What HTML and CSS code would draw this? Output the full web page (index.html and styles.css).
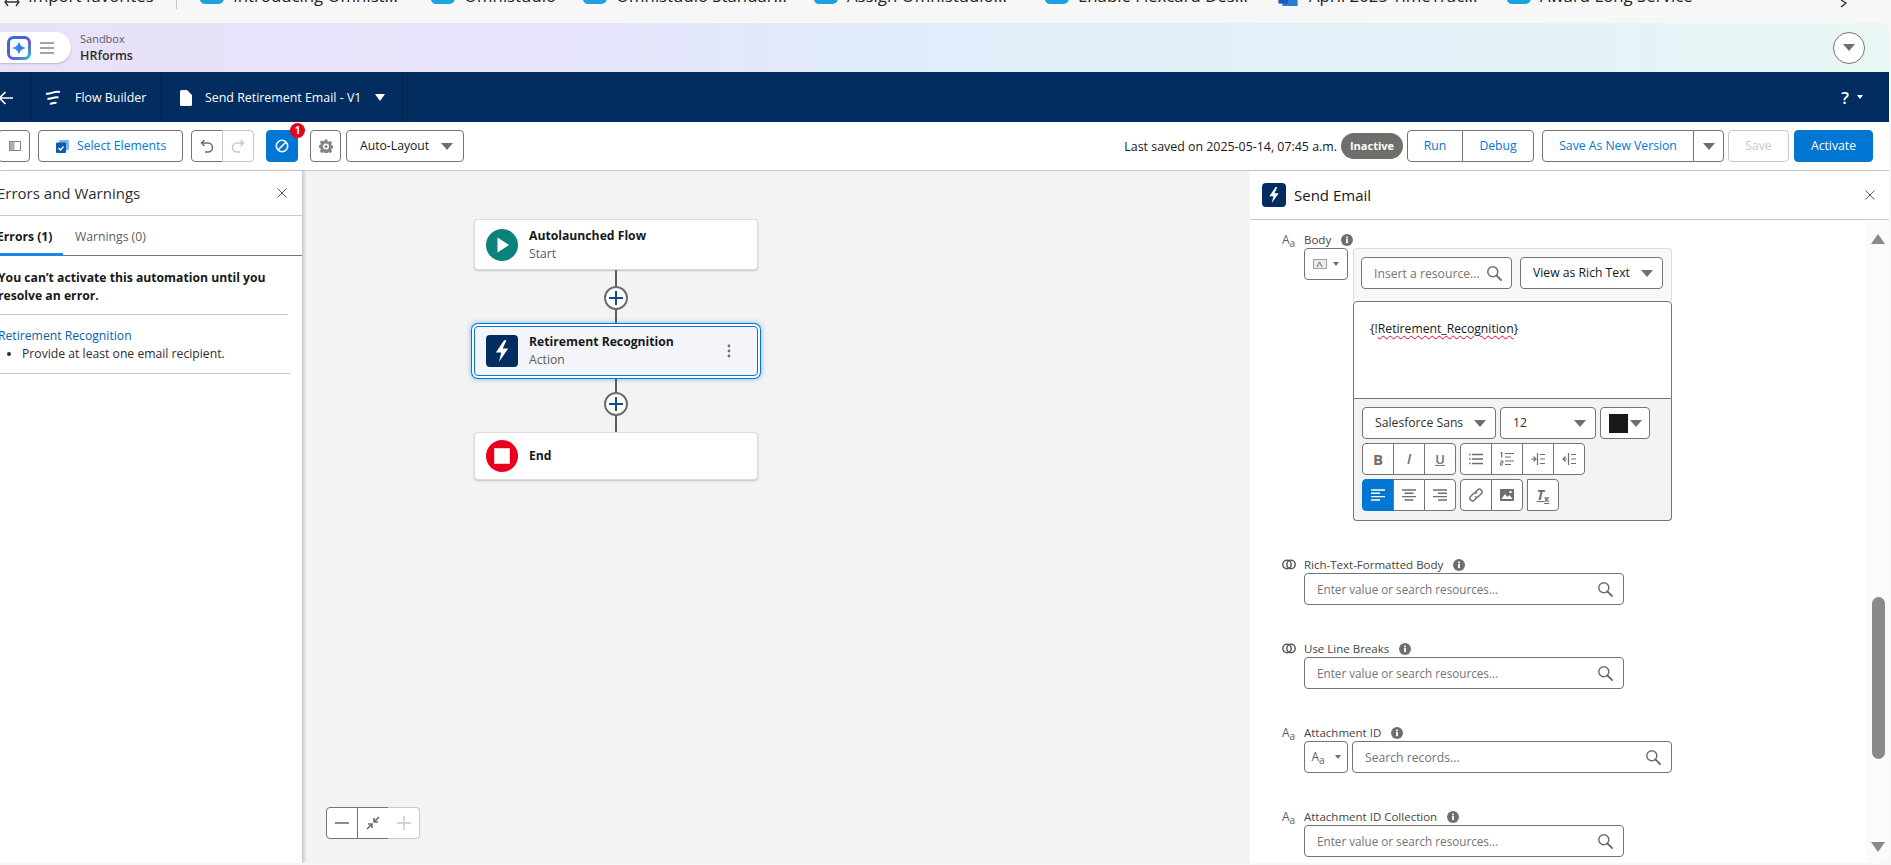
FILE: index.html
```html
<!DOCTYPE html>
<html lang="en">
<head>
    <meta charset="UTF-8">
    <title>Flow Builder</title>
    <link rel="stylesheet" href="styles.css">
</head>
<body>
    <!-- shared icons -->
    <svg class="sprite" aria-hidden="true">
        <symbol id="i-search" viewBox="0 0 16 16"><circle cx="6.800" cy="6.800" r="5" fill="none" stroke="currentColor" stroke-width="1.500"/><path d="M10.500 10.500 15 15" stroke="currentColor" stroke-width="1.800" stroke-linecap="round"/></symbol>
        <symbol id="i-bolt" viewBox="0 0 24 24"><path d="M13.600 4 7.400 13.200h4l-1.600 6.800 6.900-9.800h-4.200L15.400 4z" fill="#fff"/></symbol>
        <symbol id="i-cloud" viewBox="0 0 24 18"><path d="M5 16C2 16 0 14 0 11.500 0 9 2 7.400 4 7.200 5 3 8 1 11 1c2.500 0 4.500 1.200 5.500 3C20.500 3.800 24 6.500 24 10.500 24 14 21 16 18 16z" fill="#1ea1e0"/></symbol>
        <symbol id="i-rings" viewBox="0 0 14 11"><circle cx="5" cy="5.500" r="4.200" fill="none" stroke="#5c5c5c" stroke-width="1.500"/><circle cx="9" cy="5.500" r="4.200" fill="none" stroke="#5c5c5c" stroke-width="1.500"/></symbol>
        <symbol id="i-info" viewBox="0 0 12 12"><circle cx="6" cy="6" r="6" fill="#706e6b"/><rect x="5.100" y="5" width="1.800" height="4.200" fill="#fff"/><rect x="5.100" y="2.600" width="1.800" height="1.700" fill="#fff"/></symbol>
        <symbol id="i-plus" viewBox="0 0 14 14"><path d="M0 7h14M7 0v14" stroke="#0b4f8f" stroke-width="2"/></symbol>
    </svg>

    <!-- browser favorites bar -->
    <div class="favorites">
        <div class="fav fav-import">
            <svg class="fav-arrows" viewBox="0 0 16 10"><path d="M1 5h14M4 1 1 5l3 4M12 1l3 4-3 4" fill="none" stroke="#333" stroke-width="1.300"/></svg>
            <span>Import favorites</span>
        </div>
        <div class="fav-sep"></div>
        <div class="fav"><svg class="fav-icon"><use href="#i-cloud"/></svg><span>Introducing Omnist...</span></div>
        <div class="fav fav-short"><svg class="fav-icon"><use href="#i-cloud"/></svg><span>Omnistudio</span></div>
        <div class="fav"><svg class="fav-icon"><use href="#i-cloud"/></svg><span>Omnistudio Standar...</span></div>
        <div class="fav"><svg class="fav-icon"><use href="#i-cloud"/></svg><span>Assign Omnistudio...</span></div>
        <div class="fav"><svg class="fav-icon"><use href="#i-cloud"/></svg><span>Enable Flexcard Des...</span></div>
        <div class="fav"><svg class="fav-icon fav-word" viewBox="0 0 24 10"><rect x="5" width="19" height="10" fill="#2b7cd3"/><rect width="12" height="7" fill="#185abd"/></svg><span>April 2025 TimeTrac...</span></div>
        <div class="fav"><svg class="fav-icon"><use href="#i-cloud"/></svg><span>Award Long Service</span></div>
        <svg class="fav-more" viewBox="0 0 10 8"><path d="M3 0 8 3 3 7" fill="none" stroke="#333" stroke-width="1.400"/></svg>
    </div>

    <div class="app">
        <!-- org bar -->
        <div class="org-bar">
            <div class="launcher">
                <svg class="logo" viewBox="0 0 24 24">
                    <defs><linearGradient id="logoEdge" x1="0" y1="0" x2="1" y2="1"><stop offset="0" stop-color="#2a6fe8"/><stop offset=".55" stop-color="#6b4fe0"/><stop offset="1" stop-color="#35b5c5"/></linearGradient></defs>
                    <rect x="1.500" y="1.500" width="21" height="21" rx="5" fill="#fff" stroke="url(#logoEdge)" stroke-width="3"/>
                    <path d="M12 5c.8 4 2.600 6 7 7-4.400 1-6.200 3-7 7-.8-4-2.600-6-7-7 4.400-1 6.200-3 7-7z" fill="#2f86e8"/>
                </svg>
                <svg class="burger" viewBox="0 0 14 12"><path d="M0 1h14M0 6h14M0 11h14" stroke="#858585" stroke-width="1.600"/></svg>
            </div>
            <div class="org-name">
                <div class="org-kind">Sandbox</div>
                <div class="org-title">HRforms</div>
            </div>
            <div class="org-toggle"><span class="caret caret-grey"></span></div>
        </div>

        <!-- builder nav -->
        <div class="nav">
            <div class="nav-cell nav-back">
                <svg class="nav-arrow" viewBox="0 0 16 14"><path d="M15 7H2M7.500 1 1.500 7l6 6" fill="none" stroke="#fff" stroke-width="1.600"/></svg>
            </div>
            <div class="nav-cell nav-app">
                <svg class="nav-flow" viewBox="0 0 16 16"><path d="M1 3.500c4 1.500 8-3 14-1.500M2.500 8.500c3 1.500 7-2.500 11-1M5 13.500c2 .8 4-1.500 6.500-.5" fill="none" stroke="#fff" stroke-width="2"/></svg>
                Flow Builder
            </div>
            <div class="nav-cell nav-doc">
                <svg class="nav-file" viewBox="0 0 12 16"><path d="M1.500 0H7l5 5v9.500a1.500 1.500 0 0 1-1.500 1.500h-9A1.500 1.500 0 0 1 0 14.500v-13A1.500 1.500 0 0 1 1.500 0z" fill="#fff"/></svg>
                Send Retirement Email - V1
                <span class="caret caret-white"></span>
            </div>
            <div class="nav-help">?<span class="caret caret-tiny"></span></div>
        </div>

        <!-- builder toolbar -->
        <div class="toolbar">
            <button class="btn btn-icon btn-panel"><svg class="panel-icon" viewBox="0 0 12 10"><rect x=".5" y=".5" width="11" height="9" fill="#fff" stroke="#858585"/><rect x="1" y="1" width="4.500" height="8" fill="#b0b0b0"/></svg></button>
            <button class="btn btn-select">
                <svg class="select-icon" viewBox="0 0 13 13"><rect x="3" y="0" width="10" height="10" rx="1" fill="#7fb5e6"/><rect x="0" y="2.500" width="10" height="10.500" rx="1" fill="#0b5cab"/><path d="M2.500 8l2 2 3-3.500" fill="none" stroke="#fff" stroke-width="1.200"/></svg>
                Select Elements
            </button>
            <div class="btn-group group-undo">
                <button class="btn btn-icon"><svg class="tb-icon" viewBox="0 0 14 14"><path d="M4.500 1 1.500 4l3 3M2 4h6a4.500 4.500 0 0 1 0 9H5" fill="none" stroke="#706e6b" stroke-width="1.500"/></svg></button>
                <button class="btn btn-icon btn-off"><svg class="tb-icon" viewBox="0 0 14 14"><path d="M9.500 1l3 3-3 3M12 4H6a4.500 4.500 0 0 0 0 9h3" fill="none" stroke="#c9c9c9" stroke-width="1.500"/></svg></button>
            </div>
            <button class="btn btn-icon btn-error">
                <svg class="tb-icon" viewBox="0 0 14 14"><circle cx="7" cy="7" r="5.700" fill="none" stroke="#fff" stroke-width="1.600"/><path d="M3.200 10.800 10.800 3.200" stroke="#fff" stroke-width="1.600"/></svg>
                <span class="badge">1</span>
            </button>
            <button class="btn btn-icon btn-gear">
                <svg class="tb-icon" viewBox="0 0 14 14"><path d="M5.800.5h2.400l.4 1.700 1.300.6 1.500-.9 1.700 1.700-.9 1.500.6 1.300 1.700.4v2.400l-1.700.4-.6 1.300.9 1.500-1.700 1.700-1.500-.9-1.300.6-.4 1.700H5.800l-.4-1.700-1.300-.6-1.500.9L.9 11.900l.9-1.500-.6-1.300L-.5 8.700V6.300l1.700-.4.600-1.300-.9-1.500L2.600 1.400l1.500.9 1.300-.6z" fill="#858585"/><circle cx="7" cy="7.500" r="3" fill="#fff"/><circle cx="7" cy="7.500" r="1.500" fill="#858585"/></svg>
            </button>
            <button class="btn btn-layout">Auto-Layout<span class="caret caret-grey"></span></button>

            <div class="toolbar-right">
                <span class="saved">Last saved on 2025-05-14, 07:45 a.m.</span>
                <span class="status">Inactive</span>
                <div class="btn-group group-run">
                    <button class="btn btn-run">Run</button>
                    <button class="btn btn-debug">Debug</button>
                </div>
                <div class="btn-group group-save">
                    <button class="btn btn-saveas">Save As New Version</button>
                    <button class="btn btn-more"><span class="caret caret-grey"></span></button>
                </div>
                <button class="btn btn-save">Save</button>
                <button class="btn btn-activate">Activate</button>
            </div>
        </div>

        <div class="workspace">
            <!-- errors panel -->
            <aside class="errors">
                <div class="errors-head">
                    <h2>Errors and Warnings</h2>
                    <svg class="close" viewBox="0 0 10 10"><path d="M.5.5l9 9M9.500.5l-9 9" stroke="#5c5c5c" stroke-width="1"/></svg>
                </div>
                <div class="tabs">
                    <div class="tab tab-active">Errors (1)</div>
                    <div class="tab">Warnings (0)</div>
                </div>
                <div class="errors-msg">You can’t activate this automation until you resolve an error.</div>
                <div class="errors-item">
                    <a class="errors-link">Retirement Recognition</a>
                    <ul><li>Provide at least one email recipient.</li></ul>
                </div>
            </aside>

            <!-- flow canvas -->
            <main class="canvas">
                <div class="flow">
                    <div class="node">
                        <svg class="node-icon" viewBox="0 0 32 32"><circle cx="16" cy="16" r="16" fill="#0b827c"/><path d="M11.500 8.500v15L23 16z" fill="#fff"/></svg>
                        <div>
                            <div class="node-title">Autolaunched Flow</div>
                            <div class="node-sub">Start</div>
                        </div>
                    </div>
                    <div class="connector"><span class="plus"><svg class="plus-icon"><use href="#i-plus"/></svg></span></div>
                    <div class="node node-selected">
                        <svg class="node-icon node-action" viewBox="0 0 24 24"><use href="#i-bolt"/></svg>
                        <div>
                            <div class="node-title">Retirement Recognition</div>
                            <div class="node-sub">Action</div>
                        </div>
                        <svg class="node-dots" viewBox="0 0 4 14"><circle cx="2" cy="2" r="1.400"/><circle cx="2" cy="7" r="1.400"/><circle cx="2" cy="12" r="1.400"/></svg>
                    </div>
                    <div class="connector"><span class="plus"><svg class="plus-icon"><use href="#i-plus"/></svg></span></div>
                    <div class="node node-end">
                        <svg class="node-icon" viewBox="0 0 32 32"><circle cx="16" cy="16" r="16" fill="#ea001e"/><rect x="8.500" y="8.500" width="15" height="15" fill="#fff" stroke="#f6c6cc" stroke-width="1"/></svg>
                        <div class="node-title">End</div>
                    </div>
                </div>

                <div class="zoom-ctl">
                    <button class="zoom-btn"><svg viewBox="0 0 14 14"><path d="M0 7h14" stroke="#706e6b" stroke-width="1.600"/></svg></button>
                    <button class="zoom-btn"><svg viewBox="0 0 14 14"><path d="M13 1 8.500 5.500M8 2v4h4M1 13l4.500-4.500M2 8h4v4" fill="none" stroke="#706e6b" stroke-width="1.600"/></svg></button>
                    <button class="zoom-btn zoom-off"><svg viewBox="0 0 14 14"><path d="M0 7h14M7 0v14" stroke="#c9c9c9" stroke-width="1.400"/></svg></button>
                </div>
            </main>

            <!-- element editor -->
            <section class="editor">
                <div class="editor-head">
                    <svg class="editor-icon" viewBox="0 0 24 24"><use href="#i-bolt"/></svg>
                    <h2>Send Email</h2>
                    <svg class="close editor-close" viewBox="0 0 10 10"><path d="M.5.5l9 9M9.500.5l-9 9" stroke="#5c5c5c" stroke-width="1"/></svg>
                </div>
                <div class="editor-body">
                    <div class="fields">
                        <div class="field field-rte">
                            <div class="field-label"><span class="aa">A<small>a</small></span><label>Body</label><svg class="info"><use href="#i-info"/></svg></div>
                            <div class="field-row">
                                <button class="btn type-btn"><svg class="type-glyph" viewBox="0 0 14 10"><rect x=".5" y=".5" width="13" height="9" fill="#ecebea" stroke="#a0a0a0"/><path d="M4 8l2.500-5L9 8" fill="none" stroke="#706e6b"/></svg><span class="caret caret-tiny-grey"></span></button>
                                <div class="rte">
                                    <div class="rte-top">
                                        <div class="input input-insert"><input placeholder="Insert a resource..."><svg class="search"><use href="#i-search"/></svg></div>
                                        <button class="btn btn-view">View as Rich Text<span class="caret caret-grey"></span></button>
                                    </div>
                                    <div class="rte-text">{!<span class="squiggle">Retirement_Recognition</span>}</div>
                                    <div class="rte-tools">
                                        <div class="tools-row">
                                            <button class="btn tool-select tool-font">Salesforce Sans<span class="caret caret-grey"></span></button>
                                            <button class="btn tool-select tool-size">12<span class="caret caret-grey"></span></button>
                                            <button class="btn tool-color"><span class="swatch"></span><span class="caret caret-grey"></span></button>
                                        </div>
                                        <div class="tools-row">
                                            <div class="btn-group">
                                                <button class="btn tool tool-b">B</button>
                                                <button class="btn tool tool-i">I</button>
                                                <button class="btn tool tool-u">U</button>
                                            </div>
                                            <div class="btn-group">
                                                <button class="btn tool"><svg viewBox="0 0 14 12"><path d="M3 1.500h11M3 6h11M3 10.500h11M0 1.500h1.500M0 6h1.500M0 10.500h1.500" stroke="#706e6b" stroke-width="1.300"/></svg></button>
                                                <button class="btn tool"><svg viewBox="0 0 14 14"><path d="M5 1.500h9M5 5h6M5 9h9M5 12.500h6M.5 1l1.300-.5v5M.3 9h2.400v2H.3v2h2.700" fill="none" stroke="#706e6b" stroke-width="1.200"/></svg></button>
                                                <button class="btn tool"><svg viewBox="0 0 14 12"><path d="M0 6h4M2.500 3.500 5 6l-2.500 2.500M6.500 0v12M9 1.500h5M9 6h5M9 10.500h5" fill="none" stroke="#706e6b" stroke-width="1.200"/></svg></button>
                                                <button class="btn tool"><svg viewBox="0 0 14 12"><path d="M5 6H1M3.500 3.500 1 6l2.500 2.500M6.500 0v12M9 1.500h5M9 6h5M9 10.500h5" fill="none" stroke="#706e6b" stroke-width="1.200"/></svg></button>
                                            </div>
                                        </div>
                                        <div class="tools-row">
                                            <div class="btn-group">
                                                <button class="btn tool tool-on"><svg viewBox="0 0 14 12"><path d="M0 1h14M0 4.300h9M0 7.600h14M0 11h9" stroke="#fff" stroke-width="1.400"/></svg></button>
                                                <button class="btn tool"><svg viewBox="0 0 14 12"><path d="M0 1h14M2.500 4.300h9M0 7.600h14M2.500 11h9" stroke="#706e6b" stroke-width="1.400"/></svg></button>
                                                <button class="btn tool"><svg viewBox="0 0 14 12"><path d="M0 1h14M5 4.300h9M0 7.600h14M5 11h9" stroke="#706e6b" stroke-width="1.400"/></svg></button>
                                            </div>
                                            <div class="btn-group">
                                                <button class="btn tool"><svg viewBox="0 0 14 14"><path d="M6 4.500 8.500 2a2.600 2.600 0 0 1 3.700 3.700L9.500 8.400a2.600 2.600 0 0 1-3.500 0M8 9.500 5.500 12a2.600 2.600 0 0 1-3.700-3.700L4.500 5.600a2.600 2.600 0 0 1 3.500 0" fill="none" stroke="#706e6b" stroke-width="1.400"/></svg></button>
                                                <button class="btn tool"><svg viewBox="0 0 14 12"><rect width="14" height="12" rx="1" fill="#706e6b"/><path d="M1.500 10 5 5l2.500 3L9.500 6l3 4z" fill="#fff"/><circle cx="10.500" cy="3" r="1.200" fill="#fff"/></svg></button>
                                            </div>
                                            <div class="btn-group">
                                                <button class="btn tool tool-clear">T<small>x</small></button>
                                            </div>
                                        </div>
                                    </div>
                                </div>
                            </div>
                        </div>

                        <div class="field">
                            <div class="field-label"><svg class="rings"><use href="#i-rings"/></svg><label>Rich-Text-Formatted Body</label><svg class="info"><use href="#i-info"/></svg></div>
                            <div class="field-row">
                                <div class="input input-std"><input placeholder="Enter value or search resources..."><svg class="search"><use href="#i-search"/></svg></div>
                            </div>
                        </div>

                        <div class="field">
                            <div class="field-label"><svg class="rings"><use href="#i-rings"/></svg><label>Use Line Breaks</label><svg class="info"><use href="#i-info"/></svg></div>
                            <div class="field-row">
                                <div class="input input-std"><input placeholder="Enter value or search resources..."><svg class="search"><use href="#i-search"/></svg></div>
                            </div>
                        </div>

                        <div class="field">
                            <div class="field-label"><span class="aa">A<small>a</small></span><label>Attachment ID</label><svg class="info"><use href="#i-info"/></svg></div>
                            <div class="field-row">
                                <button class="btn type-btn"><span class="aa aa-btn">A<small>a</small></span><span class="caret caret-tiny-grey"></span></button>
                                <div class="input input-wide"><input placeholder="Search records..."><svg class="search"><use href="#i-search"/></svg></div>
                            </div>
                        </div>

                        <div class="field">
                            <div class="field-label"><span class="aa">A<small>a</small></span><label>Attachment ID Collection</label><svg class="info"><use href="#i-info"/></svg></div>
                            <div class="field-row">
                                <div class="input input-std"><input placeholder="Enter value or search resources..."><svg class="search"><use href="#i-search"/></svg></div>
                            </div>
                        </div>
                    </div>

                    <div class="scrollbar">
                        <span class="scroll-up"></span>
                        <div class="scroll-thumb"></div>
                        <span class="scroll-down"></span>
                    </div>
                </div>
            </section>
        </div>
    </div>
</body>
</html>
```

FILE: styles.css
```css
* {
    box-sizing: border-box;
    margin: 0;
    padding: 0;
}

html, body {
    width: 1891px;
    height: 865px;
    overflow: hidden;
}

body {
    background-color: #f7f7f7;
    color: #181818;
    font-family: "Open Sans", "Noto Sans", sans-serif;
    font-size: 12.2px;
}

button, input {
    font-family: inherit;
    font-size: 12.2px;
}

svg {
    display: block;
    flex: none;
}

.sprite {
    position: absolute;
    width: 0;
    height: 0;
}

/* favorites bar */
.favorites {
    display: flex;
    height: 23px;
    overflow: hidden;
    padding-left: 4px;
    background-color: #f7f7f7;
}

.fav {
    display: flex;
    flex: none;
    width: 231px;
    height: 23px;
    font-size: 16.8px;
    line-height: 20px;
    color: #222;
}

.fav span {
    margin-top: -14px;
    white-space: nowrap;
}

.fav-short {
    width: 152px;
}

.fav-import {
    width: 172px;
}

.fav-arrows {
    width: 16px;
    height: 10px;
    margin: -3px 8px 0 0;
}

.fav-sep {
    width: 1px;
    height: 9px;
    margin-right: 23px;
    background-color: #c9c9c9;
}

.fav-icon {
    width: 24px;
    height: 18px;
    margin: -12px 9px 0 0;
}

.fav-word {
    height: 8px;
    margin-top: -2px;
}

.fav-more {
    width: 10px;
    height: 8px;
    margin-left: 100px;
}

/* app frame */
.app {
    display: flex;
    flex-direction: column;
    width: 1889px;
    height: 840px;
    overflow: hidden;
    border-top-right-radius: 8px;
    border-bottom-right-radius: 8px;
    background-color: #fff;
}

.org-bar {
    display: flex;
    align-items: center;
    flex: none;
    height: 49px;
    background: linear-gradient(90deg, #e9e1f8 0%, #e5e4fa 30%, #e0edfa 50%, #e3f1f8 75%, #e9f6f5 100%);
}

.launcher {
    display: flex;
    align-items: center;
    width: 71px;
    height: 31px;
    padding-left: 7px;
    border-radius: 0 16px 16px 0;
    background-color: #fff;
    box-shadow: 0 1px 2px rgba(0, 0, 0, 0.2);
}

.logo {
    width: 24px;
    height: 24px;
}

.burger {
    width: 14px;
    height: 12px;
    margin-left: 9px;
}

.org-name {
    margin-left: 9px;
}

.org-kind {
    font-size: 11px;
    line-height: 17px;
    color: #5c5c5c;
}

.org-title {
    font-size: 12.5px;
    font-weight: 600;
    line-height: 18px;
    color: #2e2e2e;
}

.org-toggle {
    display: flex;
    align-items: center;
    justify-content: center;
    width: 32px;
    height: 32px;
    margin-left: auto;
    margin-right: 24px;
    border: 1px solid #747474;
    border-radius: 50%;
    background-color: #fff;
}

.caret {
    display: inline-block;
    flex: none;
    width: 0;
    height: 0;
    border-left: 6px solid transparent;
    border-right: 6px solid transparent;
    border-top: 7px solid #706e6b;
}

.caret-white {
    margin-left: 14px;
    border-top-color: #fff;
    border-left-width: 5px;
    border-right-width: 5px;
}

.caret-tiny, .caret-tiny-grey {
    border-left-width: 3px;
    border-right-width: 3px;
    border-top-width: 4px;
}

.caret-tiny {
    margin-left: 8px;
    vertical-align: middle;
    border-top-color: #fff;
}

/* builder nav */
.nav {
    display: flex;
    flex: none;
    height: 50px;
    background-color: #032d60;
    color: #fff;
    font-size: 12.4px;
}

.nav-cell {
    display: flex;
    align-items: center;
    height: 100%;
    padding-top: 1px;
    border-right: 1px solid #01224b;
}

.nav-back {
    width: 31px;
}

.nav-arrow {
    width: 16px;
    height: 14px;
    margin-left: -2px;
}

.nav-app {
    width: 131px;
    padding-left: 14px;
}

.nav-flow {
    width: 16px;
    height: 16px;
    margin-right: 14px;
}

.nav-doc {
    width: 241px;
    padding-left: 18px;
}

.nav-file {
    width: 12px;
    height: 16px;
    margin-right: 13px;
}

.nav-help {
    display: flex;
    align-items: center;
    margin-left: auto;
    margin-right: 26px;
    font-size: 17px;
    font-weight: 600;
}

/* toolbar */
.toolbar {
    display: flex;
    align-items: center;
    flex: none;
    height: 49px;
    border-bottom: 1px solid #c9c9c9;
    background-color: #fff;
}

.btn {
    display: flex;
    align-items: center;
    justify-content: center;
    height: 32px;
    border: 1px solid #747474;
    border-radius: 4px;
    background-color: #fff;
    color: #0176d3;
    line-height: 1;
    white-space: nowrap;
}

.btn-group {
    display: flex;
}

.btn-group .btn {
    border-radius: 0;
    margin-left: -1px;
}

.btn-group .btn:first-child {
    margin-left: 0;
    border-radius: 4px 0 0 4px;
}

.btn-group .btn:last-child {
    border-radius: 0 4px 4px 0;
}

.btn-icon {
    position: relative;
    width: 32px;
}

.tb-icon {
    width: 14px;
    height: 14px;
}

.panel-icon {
    width: 12px;
    height: 10px;
    margin-left: 1px;
}

.select-icon {
    width: 13px;
    height: 13px;
}

.btn-panel {
    margin-left: -2px;
}

.btn-select {
    justify-content: flex-start;
    width: 145px;
    margin-left: 8px;
    padding-left: 17px;
    gap: 8px;
}

.group-undo {
    margin-left: 8px;
}

.btn-off {
    border-color: #c9c9c9;
}

.btn-error {
    margin-left: 12px;
    border-color: #0176d3;
    background-color: #0176d3;
}

.badge {
    position: absolute;
    top: -8px;
    right: -8px;
    width: 15px;
    height: 15px;
    border-radius: 50%;
    background-color: #ea001e;
    color: #fff;
    font-size: 10px;
    font-weight: 700;
    line-height: 15px;
    text-align: center;
}

.btn-gear {
    width: 31px;
    margin-left: 12px;
}

.btn-layout {
    justify-content: space-between;
    width: 118px;
    margin-left: 5px;
    padding: 0 10px 0 13px;
    color: #181818;
}

.toolbar-right {
    display: flex;
    align-items: center;
    margin-left: auto;
    margin-right: 16px;
}

.saved {
    color: #181818;
    font-size: 12.4px;
    white-space: nowrap;
}

.status {
    width: 62px;
    height: 26px;
    margin-left: 4px;
    border-radius: 13px;
    background-color: #706e6b;
    color: #fff;
    font-weight: 700;
    font-size: 11px;
    line-height: 26px;
    text-align: center;
}

.group-run {
    margin-left: 4px;
}

.btn-run {
    width: 56px;
}

.btn-debug {
    width: 72px;
}

.group-save {
    margin-left: 8px;
}

.btn-saveas {
    width: 152px;
}

.btn-more {
    width: 31px;
}

.btn-save {
    width: 61px;
    margin-left: 4px;
    border-color: #c9c9c9;
    color: #c9c9c9;
}

.btn-activate {
    width: 79px;
    margin-left: 5px;
    border-color: #0176d3;
    background-color: #0176d3;
    color: #fff;
}

.workspace {
    display: flex;
    flex: 1;
    min-height: 0;
}

/* errors panel */
.errors {
    flex: none;
    width: 303px;
    border-right: 1px solid #c9c9c9;
    box-shadow: 2px 0 2px rgba(0, 0, 0, 0.12);
    background-color: #fff;
    z-index: 1;
}

.errors-head {
    display: flex;
    align-items: center;
    height: 45px;
    padding: 0 15px 0 0;
    border-bottom: 1px solid #c9c9c9;
}

.errors-head h2 {
    margin-left: -3px;
    font-size: 15px;
    font-weight: 400;
    color: #2e2e2e;
}

.close {
    width: 10px;
    height: 10px;
    margin-left: auto;
}

.tabs {
    display: flex;
    height: 40px;
    border-bottom: 1px solid #747474;
}

.tab {
    width: 78px;
    line-height: 41px;
    color: #5c5c5c;
}

.tab-active {
    width: 63px;
    margin-right: 12px;
    height: 40px;
    text-indent: -3px;
    border-bottom: 3px solid #1b86e3;
    color: #181818;
    font-weight: 700;
}

.errors-msg {
    width: 290px;
    margin-left: -2px;
    padding: 13px 10px 10px 0;
    border-bottom: 1px solid #c9c9c9;
    font-weight: 700;
    line-height: 17.5px;
}

.errors-item {
    width: 290px;
    padding: 12px 0 11px;
    border-bottom: 1px solid #c9c9c9;
    line-height: 17.5px;
}

.errors-link {
    display: block;
    margin-left: -2px;
    color: #0b5cab;
}

.errors-item ul {
    padding-left: 22px;
    color: #2e2e2e;
}

/* flow canvas */
.canvas {
    position: relative;
    flex: none;
    width: 947px;
    background-color: #f3f3f3;
}

.flow {
    display: flex;
    flex-direction: column;
    align-items: center;
    width: 284px;
    margin-left: 171px;
    padding-top: 48px;
}

.node {
    display: flex;
    align-items: center;
    flex: none;
    gap: 11px;
    width: 284px;
    height: 51px;
    padding-left: 11px;
    border: 1px solid #dcdcdc;
    border-radius: 4px;
    background-color: #fff;
    box-shadow: 0 1px 2px rgba(0, 0, 0, 0.2);
}

.node-selected {
    position: relative;
    height: 50px;
    border-color: #0176d3;
    background-color: #f3f5fb;
    box-shadow: 0 0 0 2px #fff, 0 0 0 3px #0176d3, 0 0 4px 4px rgba(1, 118, 211, 0.35);
}

.node-end {
    height: 48px;
}

.node-icon {
    width: 32px;
    height: 32px;
}

.node-action {
    border-radius: 4px;
    background-color: #032d60;
}

.node-title {
    font-weight: 700;
    line-height: 18px;
    color: #181818;
}

.node-sub {
    line-height: 18px;
    color: #5c5c5c;
}

.node-dots {
    width: 4px;
    height: 14px;
    margin-left: auto;
    margin-right: 26px;
    fill: #706e6b;
}

.connector {
    display: flex;
    align-items: center;
    justify-content: center;
    flex: none;
    width: 2px;
    height: 56px;
    background-color: #5c5c5c;
}

.plus {
    display: flex;
    align-items: center;
    justify-content: center;
    flex: none;
    width: 24px;
    height: 24px;
    border: 2px solid #706e6b;
    border-radius: 50%;
    background-color: #fff;
}

.plus-icon {
    width: 14px;
    height: 14px;
}

.zoom-ctl {
    position: absolute;
    left: 23px;
    bottom: 24px;
    display: flex;
}

.zoom-btn {
    display: flex;
    align-items: center;
    justify-content: center;
    width: 32px;
    height: 32px;
    margin-left: -1px;
    border: 1px solid #747474;
    background-color: #fff;
}

.zoom-btn:first-child {
    margin-left: 0;
    border-radius: 4px 0 0 4px;
}

.zoom-btn svg {
    width: 14px;
    height: 14px;
}

.zoom-off {
    border-color: #c9c9c9;
    border-left: 0;
    border-radius: 0 4px 4px 0;
}

/* element editor */
.editor {
    display: flex;
    flex-direction: column;
    flex: 1;
    min-width: 0;
    background-color: #fff;
    box-shadow: -2px 0 2px rgba(0, 0, 0, 0.1);
}

.editor-head {
    display: flex;
    align-items: center;
    flex: none;
    height: 49px;
    padding: 0 14px 0 12px;
    border-bottom: 1px solid #c9c9c9;
}

.editor-icon {
    width: 24px;
    height: 24px;
    border-radius: 4px;
    background-color: #032d60;
}

.editor-head h2 {
    margin-left: 8px;
    font-size: 15px;
    font-weight: 400;
}

.editor-close {
    width: 10px;
    height: 10px;
}

.editor-body {
    display: flex;
    flex: 1;
    min-height: 0;
}

.fields {
    flex: 1;
    min-width: 0;
    overflow: hidden;
    padding: 11px 0 0 32px;
}

.field {
    margin-bottom: 35px;
}

.field-label {
    display: flex;
    align-items: center;
    height: 17px;
    color: #444;
}

.field-label label {
    font-size: 11.5px;
    line-height: 15px;
}

.aa {
    display: inline-block;
    width: 22px;
    font-size: 12px;
    line-height: 1;
    color: #5c5c5c;
}

.aa small {
    position: relative;
    top: 3px;
    font-size: 10px;
}

.aa-btn {
    width: auto;
    margin-right: 4px;
}

.rings {
    width: 14px;
    height: 11px;
    margin-right: 8px;
}

.info {
    width: 12px;
    height: 12px;
    margin-left: 10px;
}

.field-row {
    display: flex;
    align-items: flex-start;
    margin-left: 22px;
}

.type-btn {
    flex: none;
    gap: 6px;
    width: 44px;
}

.type-glyph {
    width: 14px;
    height: 10px;
}

.input {
    display: flex;
    align-items: center;
    height: 32px;
    padding: 0 10px 0 12px;
    border: 1px solid #747474;
    border-radius: 4px;
    background-color: #fff;
}

.input input {
    flex: 1;
    min-width: 0;
    border: 0;
    outline: 0;
    background: none;
}

.input input::placeholder {
    color: #747474;
    opacity: 1;
}

.search {
    width: 16px;
    height: 16px;
    margin-left: 4px;
    color: #706e6b;
}

.input-std {
    width: 320px;
}

.input-std input {
    font-size: 11.7px;
}

.input-wide {
    width: 320px;
    margin-left: 4px;
}

.input-insert {
    width: 151px;
    height: 32px;
    padding-right: 9px;
}

/* rich text editor */
.rte {
    flex: none;
    width: 319px;
    margin-left: 5px;
}

.rte-top {
    display: flex;
    gap: 8px;
    height: 53px;
    padding: 8px 7px 0;
    border: 1px solid #dcdcdc;
    border-bottom: 0;
    border-radius: 4px 4px 0 0;
    background-color: #f8f8f6;
}

.btn-view {
    justify-content: space-between;
    width: 143px;
    padding: 0 9px 0 12px;
    color: #181818;
}

.rte-text {
    height: 98px;
    padding: 18px 16px 0;
    border: 1px solid #747474;
    border-radius: 4px 4px 0 0;
    background-color: #fff;
    line-height: 18px;
}

.squiggle {
    text-decoration: underline wavy #ea001e 1px;
    text-underline-offset: 2px;
}

.rte-tools {
    display: flex;
    flex-direction: column;
    gap: 4px;
    height: 122px;
    padding: 8px 0 0 8px;
    border: 1px solid #747474;
    border-top: 0;
    border-radius: 0 0 4px 4px;
    background-color: #f3f3f3;
}

.tools-row {
    display: flex;
    gap: 4px;
}

.tool-select {
    justify-content: space-between;
    padding: 0 9px 0 12px;
    color: #2e2e2e;
}

.tool-font {
    width: 134px;
}

.tool-size {
    width: 96px;
}

.tool-color {
    gap: 2px;
    width: 50px;
}

.swatch {
    width: 19px;
    height: 19px;
    background-color: #181818;
}

.tool {
    width: 32px;
    color: #706e6b;
}

.tool svg {
    width: 14px;
    height: 14px;
}

.tool-b {
    font-size: 15px;
    font-weight: 700;
}

.tool-i {
    font-size: 14px;
    font-style: italic;
    font-weight: 600;
}

.tool-u {
    font-size: 13px;
    font-weight: 600;
    text-decoration: underline;
}

.tool-on {
    border-color: #0176d3;
    background-color: #0176d3;
}

.tool-clear {
    font-size: 14px;
    font-style: italic;
    font-weight: 700;
    text-decoration: underline;
}

.tool-clear small {
    font-size: 9px;
    font-style: normal;
    position: relative;
    top: 3px;
}

/* scrollbar drawn as part of the panel */
.scrollbar {
    display: flex;
    flex-direction: column;
    align-items: center;
    flex: none;
    width: 22px;
    background-color: #fbfbfb;
}

.scroll-up, .scroll-down {
    width: 0;
    height: 0;
    border-left: 7px solid transparent;
    border-right: 7px solid transparent;
}

.scroll-up {
    margin-top: 14px;
    border-bottom: 10px solid #8a8a8a;
}

.scroll-thumb {
    width: 13px;
    height: 162px;
    margin-top: 353px;
    border-radius: 7px;
    background-color: #8a8a8a;
}

.scroll-down {
    margin-top: 83px;
    border-top: 10px solid #8a8a8a;
}
```
